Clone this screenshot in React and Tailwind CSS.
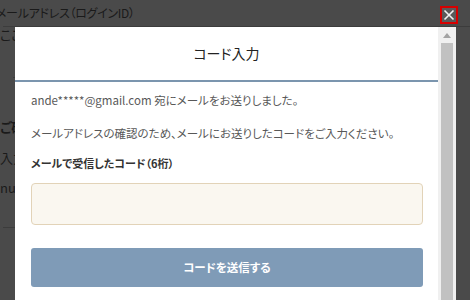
import React from "react";

const jp = "font-['Noto_Sans_CJK_JP','Noto_Sans',sans-serif] [font-feature-settings:'palt']";

const CloseIcon = () => (
  <svg width="12" height="12" viewBox="0 0 12 12">
    <path d="M1.5 1.5 L10.5 10.5 M10.5 1.5 L1.5 10.5" stroke="#f2f2f2" strokeWidth="1.6" />
  </svg>
);

const App = () => {
  return (
    <div className={`relative w-[470px] h-[300px] overflow-hidden bg-[#4a4a4a] ${jp}`}>
      {/* ------------------------- page behind the overlay ------------------------- */}
      <div className="flex flex-col text-[#1a1a1a]">
        <div className="h-[26px] flex items-center -ml-[4px] text-[12px] tracking-[-0.3px]">メールアドレス（ログインID）</div>
        <div className="border-t border-[#3c3c3c] ml-[3px] flex flex-col">
          <div className="h-[16px] flex items-center text-[13px] -ml-[3px]">ここに</div>
          <div className="h-[35px] border-b border-[#3c3c3c] ml-[10px] w-[4px]"></div>
          <div className="h-[30px] flex items-center text-[13px] font-bold mt-[34px] -ml-[3px]">ご確認</div>
          <div className="h-[18px] flex items-center text-[13px] mt-[7px] -ml-[3px]">入力</div>
          <div className="h-[18px] flex items-center text-[13px] mt-[12px] -ml-[3px]">nu</div>
          <div className="mt-[30px] border-t border-[#3c3c3c] w-[12px]"></div>
        </div>
      </div>

      {/* ------------------------------- close button ------------------------------ */}
      <button className="absolute left-[440px] top-[6px] w-[18px] h-[18px] border-2 border-[#d60000] bg-[#5a5a5a] flex items-center justify-center">
        <CloseIcon />
      </button>

      {/* ---------------------------------- modal ---------------------------------- */}
      <div className="absolute left-[15px] top-[27px] w-[441px] h-[290px] flex bg-white">
        <div className="flex-1 flex flex-col">
          <div className="h-[53px] flex items-center justify-center text-[14px] text-[#222] border-b-2 border-[#7b95ae] box-content">
            コード入力
          </div>
          <div className="flex flex-col pl-[16px] pr-[15px] pt-[9px]">
            <p className="text-[11.5px] leading-[18px] text-[#585858]">
              ande*****@gmail.com 宛にメールをお送りしました。
            </p>
            <p className="mt-[15px] text-[11.5px] leading-[18px] text-[#585858]">
              メールアドレスの確認のため、メールにお送りしたコードをご入力ください。
            </p>
            <p className="mt-[12px] text-[11px] leading-[18px] font-semibold text-[#333]">
              メールで受信したコード（6桁）
            </p>
            <input
              type="text"
              className="mt-[11px] h-[42px] rounded-[4px] border border-[#e2d3b8] bg-[#faf7f0] outline-none"
            />
            <button className="mt-[23px] h-[39px] rounded-[3px] bg-[#7f9bb7] text-white text-[11.5px] font-bold">
              コードを送信する
            </button>
          </div>
        </div>

        {/* scrollbar */}
        <div className="w-[18px] bg-[#f0f0f0] flex flex-col items-center">
          <div className="h-[16px] flex items-center justify-center">
            <svg width="8" height="5" viewBox="0 0 8 5">
              <path d="M0 5 L4 0 L8 5 Z" fill="#a3a3a3" />
            </svg>
          </div>
          <div className="w-[12px] flex-1 bg-[#c1c1c1]"></div>
        </div>
      </div>
    </div>
  );
};

export default App;
